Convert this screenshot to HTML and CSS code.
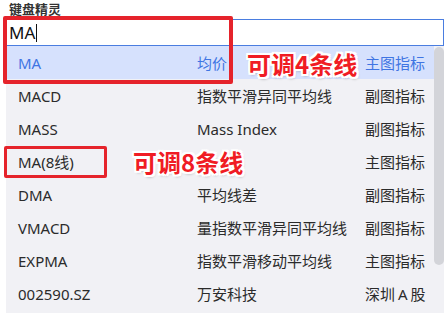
FILE: index.html
```html
<!DOCTYPE html>
<html>
<head>
    <title>键盘精灵</title>
    <link rel="stylesheet" href="styles.css">
</head>
<body>
    <div class="panel">
        <div class="title">键盘精灵</div>
        <div class="search">MA<span class="caret"></span></div>
        <div class="list">
            <div class="rows">
                <div class="row active">
                    <span>MA</span>
                    <span>均价</span>
                    <span>主图指标</span>
                </div>
                <div class="row">
                    <span>MACD</span>
                    <span>指数平滑异同平均线</span>
                    <span>副图指标</span>
                </div>
                <div class="row">
                    <span>MASS</span>
                    <span>Mass Index</span>
                    <span>副图指标</span>
                </div>
                <div class="row">
                    <span>MA(8线)</span>
                    <span></span>
                    <span>主图指标</span>
                </div>
                <div class="row">
                    <span>DMA</span>
                    <span>平均线差</span>
                    <span>副图指标</span>
                </div>
                <div class="row">
                    <span>VMACD</span>
                    <span>量指数平滑异同平均线</span>
                    <span>副图指标</span>
                </div>
                <div class="row">
                    <span>EXPMA</span>
                    <span>指数平滑移动平均线</span>
                    <span>主图指标</span>
                </div>
                <div class="row">
                    <span>002590.SZ</span>
                    <span>万安科技</span>
                    <span>深圳<span class="latin">A</span>股</span>
                </div>
            </div>
            <div class="scrollbar">
                <div class="thumb"></div>
            </div>
        </div>
    </div>

    <!-- annotations drawn over the screenshot -->
    <div class="mark mark-one"></div>
    <div class="mark mark-two"></div>
    <div class="note note-one">可调4条线</div>
    <div class="note note-two">可调8条线</div>
</body>
</html>
```

FILE: styles.css
```css
body {
    margin: 0;
    font-family: "Noto Sans", "Noto Sans CJK SC", sans-serif;
    background-color: #ffffff;
    color: #2b2b2b;
}

.panel {
    width: 439px;
    margin-left: 5px;
}

.title {
    height: 19px;
    line-height: 19px;
    padding-left: 4px;
    font-size: 13px;
    font-weight: bold;
    color: #333333;
}

.search {
    box-sizing: border-box;
    height: 27px;
    border: 1px solid #4a7de0;
    padding-left: 3px;
    font-size: 17px;
    line-height: 25px;
    color: #111111;
    display: flex;
    align-items: center;
}

.caret {
    display: inline-block;
    width: 1px;
    height: 18px;
    margin-left: 1px;
    background-color: #111111;
}

.list {
    display: flex;
    margin-left: 1px;
    height: 267px;
    background-color: #f1f1f5;
}

.rows {
    flex: 1;
}

.row {
    display: grid;
    grid-template-columns: 179px 168px 1fr;
    align-items: center;
    height: 33px;
    padding-left: 12px;
    font-size: 15px;
    white-space: nowrap;
}

.row.active {
    background-color: #d6e1fd;
    color: #3f75e3;
}

.latin {
    margin: 0 3px;
}

.scrollbar {
    width: 10px;
    padding-top: 1px;
}

.thumb {
    height: 218px;
    border-radius: 5px;
    background-color: #d3d4d9;
}

.mark {
    position: absolute;
    box-sizing: border-box;
    border: 4px solid #e5232b;
    border-radius: 2px;
}

.mark-one {
    left: 3px;
    top: 16px;
    width: 230px;
    height: 68px;
}

.mark-two {
    left: 4px;
    top: 146px;
    width: 103px;
    height: 32px;
    border-width: 3px;
}

.note {
    position: absolute;
    font-family: "Noto Sans CJK SC", sans-serif;
    font-size: 24px;
    font-weight: bold;
    line-height: 1;
    color: #f01c24;
    text-shadow:
        2px 0 0 #fff, -2px 0 0 #fff, 0 2px 0 #fff, 0 -2px 0 #fff,
        2px 2px 0 #fff, -2px -2px 0 #fff, 2px -2px 0 #fff, -2px 2px 0 #fff,
        1px 2px 3px rgba(0, 0, 0, 0.35);
}

.note-one {
    left: 247px;
    top: 52px;
}

.note-two {
    left: 133px;
    top: 150px;
}
```
